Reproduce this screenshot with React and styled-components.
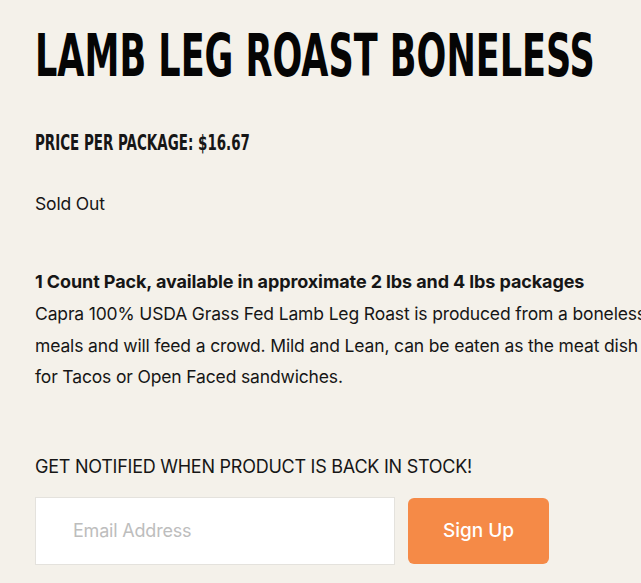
import React from 'react'
import styled, { createGlobalStyle } from 'styled-components'

const GlobalStyle = createGlobalStyle`
  html, body {
    margin: 0;
    padding: 0;
    background: #f4f1ea;
    overflow: hidden;
  }
  body {
    font-family: Inter, "Noto Sans", "Liberation Sans", sans-serif;
    color: #161616;
  }
`

const Page = styled.main`
  padding: 27px 0 0 35px;
  width: 900px;
`

// condensed display face: no Bebas here, so squeeze DejaVu Condensed
const Title = styled.h1`
  display: inline-block;
  margin: 0;
  font-family: "DejaVu Sans Condensed", "Liberation Sans", sans-serif;
  font-weight: 700;
  font-size: 58px;
  line-height: 1;
  color: #050505;
  white-space: nowrap;
  transform: scaleX(0.672);
  transform-origin: left top;
`

const Price = styled.div`
  margin-top: 47px;
  font-family: "DejaVu Sans Condensed", "Liberation Sans", sans-serif;
  font-weight: 700;
  font-size: 22px;
  line-height: 1;
  white-space: nowrap;
  transform: scaleX(0.68);
  transform-origin: left top;
`

const Text = styled.p`
  margin: ${p => p.$top || 0}px 0 0;
  font-size: ${p => (p.$bold ? 18 : 17.5)}px;
  line-height: ${p => p.$lh || 27}px;
  font-weight: ${p => (p.$bold ? 700 : 400)};
  letter-spacing: ${p => (p.$bold ? -0.1 : -0.15)}px;
  white-space: nowrap;
`

const Notify = styled.p`
  margin: 60px 0 0;
  font-size: 18px;
  line-height: 27px;
  letter-spacing: -0.25px;
`

const Form = styled.form`
  display: flex;
  gap: 13px;
  margin-top: 17px;
`

const Email = styled.input`
  box-sizing: border-box;
  width: 360px;
  height: 68px;
  padding: 0 0 0 37px;
  border: 1px solid #e4e2dd;
  background: #fff;
  font-family: inherit;
  font-size: 18px;
  letter-spacing: -0.2px;
  outline: none;

  &::placeholder {
    color: #bdbdbd;
  }
`

const Button = styled.button`
  width: 141px;
  height: 66px;
  margin-top: 1px;
  border: none;
  border-radius: 6px;
  background: #f58a47;
  color: #fff;
  font-family: inherit;
  font-size: 19px;
  font-weight: 500;
  cursor: pointer;
`

export default function App() {
  return (
    <>
      <GlobalStyle />
      <Page>
        <Title>LAMB LEG ROAST BONELESS</Title>
        <Price>PRICE PER PACKAGE: $16.67</Price>
        <Text $top={36}>Sold Out</Text>
        <Text $top={51} $bold>
          1 Count Pack, available in approximate 2 lbs and 4 lbs packages
        </Text>
        <Text $top={3} $lh={31.5}>
          Capra 100% USDA Grass Fed Lamb Leg Roast is produced from a boneless leg, ideal for family
          <br />
          meals and will feed a crowd. Mild and Lean, can be eaten as the meat dish or shredded and used
          <br />
          for Tacos or Open Faced sandwiches.
        </Text>
        <Notify>GET NOTIFIED WHEN PRODUCT IS BACK IN STOCK!</Notify>
        <Form onSubmit={e => e.preventDefault()}>
          <Email type="email" placeholder="Email Address" />
          <Button type="submit">Sign Up</Button>
        </Form>
      </Page>
    </>
  )
}
